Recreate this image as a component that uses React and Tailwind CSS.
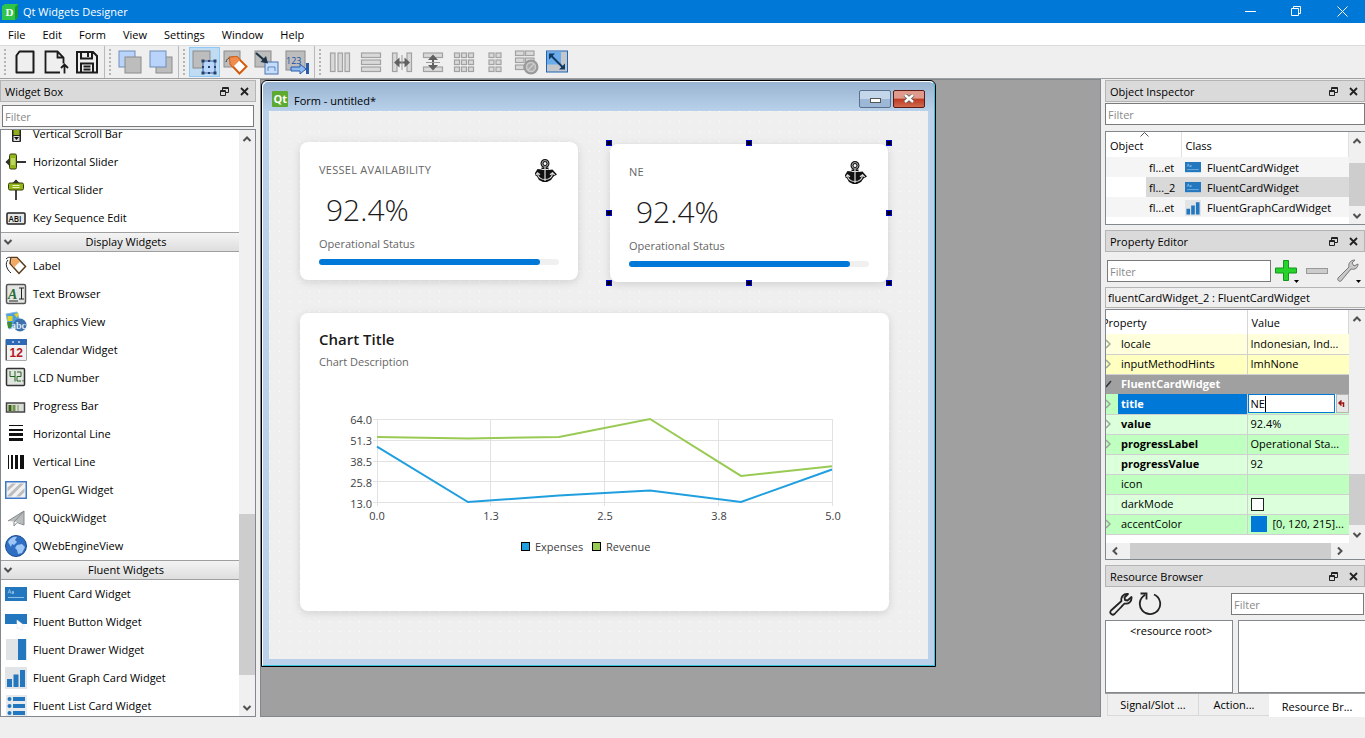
import React, { useState } from 'react';

/* ---------- small shared glyphs ---------- */

const Chevron = ({ dir = 'down' }) => {
  const paths = {
    down: 'M1.5 3 5 6.5 8.5 3',
    up: 'M1.5 7 5 3.5 8.5 7',
    left: 'M7 1.5 3.5 5 7 8.5',
    right: 'M3 1.5 6.5 5 3 8.5',
  };
  return (
    <svg width="10" height="10" viewBox="0 0 10 10" fill="none" stroke="#505050" strokeWidth="2">
      <path d={paths[dir]} />
    </svg>
  );
};

const CardGlyph = ({ className }) => (
  <svg className={className} viewBox="0 0 22 14">
    <rect width="22" height="14" fill="#2277bf" />
    <path d="M3 6.500 4.500 2.500 6 6.500M3.600 5.200h1.800M7 4.500h1.500v2H7V5.500h1.500" stroke="#9cc6ea" strokeWidth=".8" fill="none" />
    <path d="M3 10.500h16" stroke="#8fc0e8" strokeWidth="1" />
  </svg>
);

const GraphGlyph = ({ className }) => (
  <svg className={className} viewBox="0 0 22 22">
    <rect width="22" height="22" fill="#e1e5e7" />
    <path d="M2 12h5v8H2zM8.500 7.500h5V20h-5zM15 3h5v17h-5z" fill="#2277bf" />
  </svg>
);

const AnchorGlyph = () => (
  <svg width="22" height="23" viewBox="0 0 22 23" fill="none">
    <circle cx="10" cy="4.500" r="3" stroke="#111" strokeWidth="3" fill="#fff" />
    <path d="M6.500 8.500h7V11l4-.5 4.500 5-3.500 2-2.500 3.500-4 2H8l-4-2-2-3.500-2-1.500v-2l2.500-4 4 .5z" fill="#111" />
    <circle cx="10" cy="4.500" r="3" stroke="#ccc" strokeWidth=".8" />
    <path d="M6.500 10.500h7M10 8v14M2.500 14.500c.5 4 3.500 6 7.500 6s7-2 7.500-6M.8 16l1.700-2.200L5 15.800M15 15.800l2.500-2 2.200 2.200" stroke="#ddd" strokeWidth="1.200" />
  </svg>
);

/* ---------- toolbar drawings ---------- */

const GraySquare = ({ x, y, s = 16 }) => (
  <rect x={x} y={y} width={s} height={s} fill="#bdbdbd" stroke="#8c8c8c" />
);
const BlueSquare = ({ x, y, s = 16 }) => (
  <rect x={x} y={y} width={s} height={s} fill="#b9d3fa" stroke="#6f8db8" />
);
const cell = { fill: '#d9d9d9', stroke: '#a2a2a2', strokeWidth: 1.2 };

const toolGroups = [
  [
    {
      name: 'New',
      art: <path d="M6.500 1.500h14v21h-17V5.500z" fill="none" stroke="#1b1b1b" strokeWidth="2" strokeLinejoin="round" />,
    },
    {
      name: 'Open',
      art: (
        <g fill="none" stroke="#1b1b1b" strokeWidth="1.800">
          <path d="M16 22.500H1.500v-21h12l6 6v6M13.500 1.500v6h6M20.500 23.500v-9M17 18l3.500-3.500L24 18" />
        </g>
      ),
    },
    {
      name: 'Save',
      art: (
        <g fill="none" stroke="#1b1b1b" strokeWidth="2">
          <path d="M2 2h16l4 4v16.500H2zM6 2v6.500h11V2M6 22.500V13.500h12v9M8.500 16.500h7M8.500 19.500h7M13 3v4" />
        </g>
      ),
    },
  ],
  [
    { name: 'Send to Back', art: <><BlueSquare x={1} y={1} /><GraySquare x={7} y={7} /></> },
    { name: 'Bring to Front', art: <><GraySquare x={7} y={7} /><BlueSquare x={1} y={1} /></> },
  ],
  [
    {
      name: 'Edit Widgets',
      active: true,
      art: (
        <>
          <GraySquare x={1} y={1} s={17} />
          <rect x="11" y="11" width="12" height="12" fill="#b9d6fb" stroke="#3c62a0" />
          <path d="M9.500 9.500h3v3h-3zM16 10h2v2h-2zM21.500 9.500h3v3h-3zM9.500 21.500h3v3h-3zM16 22h2v2h-2zM21.500 21.500h3v3h-3zM22 16h2v2h-2zM10 16h2v2h-2zM16 16h2v2h-2z" fill="#27406b" />
        </>
      ),
    },
    {
      name: 'Edit Signals/Slots',
      art: (
        <>
          <GraySquare x={1} y={1} />
          <path d="M3 12c1-4 4-5 8-5" stroke="#333" fill="none" />
          <path d="M7 7.500 14 7l9.500 9.500-7 7L7.500 14z" fill="#fff" stroke="#d35c0c" strokeWidth="2" />
          <path d="M7 7.500 14 7l3 3-7 7-2.500-3z" fill="#f08c4e" />
        </>
      ),
    },
    {
      name: 'Edit Buddies',
      art: (
        <>
          <GraySquare x={1} y={1} />
          <rect x="11" y="12" width="13" height="12" fill="#c5dcfb" stroke="#4b74b3" />
          <path d="M14 21v-4h7v4" stroke="#5d87c5" fill="none" />
          <path d="M2 3l8 7" stroke="#1f3545" strokeWidth="2.200" />
          <path d="M14 13.500 6.500 12l5.500-6z" fill="#1f3545" />
        </>
      ),
    },
    {
      name: 'Edit Tab Order',
      art: (
        <>
          <GraySquare x={1} y={1} s={19} />
          <text x="1" y="14" fontSize="9" fill="#1a50a5" fontFamily="Open Sans, sans-serif">123</text>
          <path d="M6 17h9v-3l6 5-6 5v-3H6z" fill="#8db9f0" stroke="#2a5ca8" />
          <path d="M22.500 13v11" stroke="#2a5ca8" strokeWidth="3" />
        </>
      ),
    },
  ],
  [
    {
      name: 'Lay Out Horizontally',
      art: <g {...cell}><rect x="2.500" y="3" width="4.500" height="18.500" /><rect x="10" y="3" width="4.500" height="18.500" /><rect x="17" y="3" width="4.500" height="18.500" /></g>,
    },
    {
      name: 'Lay Out Vertically',
      art: <g {...cell}><rect x="2.500" y="3" width="19" height="4.500" /><rect x="2.500" y="10" width="19" height="4.500" /><rect x="2.500" y="17" width="19" height="4.500" /></g>,
    },
    {
      name: 'Horizontal Splitter',
      art: (
        <>
          <g {...cell}><rect x="2.500" y="3" width="4.500" height="18.500" /><rect x="17" y="3" width="4.500" height="18.500" /></g>
          <path d="M4 12.500 9.500 7.500v4h5v-4l5.500 5-5.500 5v-4h-5v4z" fill="#606060" />
          <path d="M12 5v15" stroke="#999" />
        </>
      ),
    },
    {
      name: 'Vertical Splitter',
      art: (
        <>
          <g {...cell}><rect x="2.500" y="3" width="19" height="4.500" /><rect x="2.500" y="17" width="19" height="4.500" /></g>
          <path d="M12 4.500 17 10h-4v5h4l-5 5.500L7 15h4v-5H7z" fill="#606060" />
          <path d="M5 12.500h14" stroke="#999" />
        </>
      ),
    },
    {
      name: 'Lay Out in a Grid',
      art: (
        <g {...cell}>
          {[3, 10, 17].map((y) => [2.5, 9.5, 16.5].map((x) => <rect key={`${x}-${y}`} x={x} y={y} width="5" height="4.500" />))}
        </g>
      ),
    },
    {
      name: 'Lay Out in a Form',
      art: (
        <g {...cell}>
          {[3, 10, 17].map((y) => [6, 13].map((x) => <rect key={`${x}-${y}`} x={x} y={y} width="5" height="4.500" />))}
        </g>
      ),
    },
    {
      name: 'Break Layout',
      art: (
        <>
          <g {...cell}>
            {[1, 8, 15].map((y) => [1.5, 11.5].map((x) => <rect key={`${x}-${y}`} x={x} y={y} width="8.500" height="4.500" />))}
          </g>
          <circle cx="17" cy="17" r="7.500" fill="#999" />
          <circle cx="17" cy="17" r="4.500" fill="#aaa" stroke="#ccc" strokeWidth="1.500" />
          <path d="m14 20 6-6" stroke="#ccc" strokeWidth="1.500" />
        </>
      ),
    },
    {
      name: 'Adjust Size',
      art: (
        <>
          <rect x="1.500" y="1" width="21" height="21" fill="#c3c6cb" stroke="#1d65b5" />
          <rect x="2" y="1.500" width="14" height="13" fill="#6cacea" />
          <path d="m6.500 6 11 11" stroke="#123a63" strokeWidth="2" />
          <path d="M4 3.500h6l-6 6zM20 19.500h-6l6-6z" fill="#123a63" />
        </>
      ),
    },
  ],
];

const Toolbar = () => (
  <div className="flex h-[34px] shrink-0 border-t border-b border-t-[#dcdcdc] border-b-[#a0a0a0] bg-[#efefef]">
    {toolGroups.map((group, i) => (
      <div key={i} className="flex items-center border-r border-[#b9b9b9] pr-px last:border-r-0">
        <span className="mx-1 h-[26px] border-l-2 border-dotted border-[#b5b5b5]" />
        {group.map((tool) => (
          <button
            key={tool.name}
            aria-label={tool.name}
            className={
              tool.active
                ? 'flex h-[30px] w-[31px] items-center justify-center border border-[#90c8f6] bg-[#c0dcf3]'
                : 'flex h-[30px] w-[31px] items-center justify-center'
            }
          >
            <svg width="25" height="25" viewBox="0 0 25 25" className="shrink-0 overflow-visible">{tool.art}</svg>
          </button>
        ))}
      </div>
    ))}
  </div>
);

/* ---------- widget box ---------- */

const art = {
  vscroll: (
    <>
      <rect x="7" y="0" width="9" height="19" rx="1" fill="#222" />
      <rect x="8.500" y="0" width="6" height="12" fill="#8fae1b" />
      <rect x="8.500" y="13" width="6" height="5" fill="#ddd" />
      <path d="M9 14h5l-2.500 3z" fill="#111" />
    </>
  ),
  hslider: (
    <>
      <path d="M1 11h20" stroke="#333" strokeWidth="2" />
      <path d="M4 7.500v7L.5 11z" fill="#333" />
      <rect x="4.500" y="3" width="7" height="15" rx="1.500" fill="#94b51c" stroke="#333d0a" />
      <path d="M7 7v7M9 7v7" stroke="#e7f2b5" />
    </>
  ),
  vslider: (
    <>
      <path d="M11 1v20" stroke="#444" strokeWidth="2" />
      <path d="M7.500 4 11 .5 14.500 4z" fill="#333" />
      <rect x="3.500" y="4" width="15" height="7" rx="1.500" fill="#94b51c" stroke="#333d0a" />
      <path d="M7.500 6.500h7M7.500 8.500h7" stroke="#e7f2b5" />
    </>
  ),
  keyseq: (
    <>
      <rect x="2" y="6" width="18" height="11" rx="1" fill="#e8e8e8" stroke="#222" strokeWidth="1.500" />
      <text x="3.500" y="14.500" fontSize="8" fontFamily="Open Sans, sans-serif" fontWeight="600" fill="#111">ABI</text>
    </>
  ),
  label: (
    <>
      <path d="M1 4c4-4 6 0 8 2M3 5c-3 3-2 9 3 13" stroke="#222" fill="none" />
      <path d="M6 2.500h6l8.500 9-6.500 7-9-10z" fill="#fff" stroke="#5a3c1a" strokeWidth="1.500" />
      <path d="M6.500 3.500H12l3 3-6 6-3-4z" fill="#f0aa66" />
    </>
  ),
  textBrowser: (
    <>
      <rect x="1.500" y="1.500" width="19" height="19" rx="1.500" fill="#e4e6e4" stroke="#555" strokeWidth="1.500" />
      <text x="3" y="16" fontSize="14" fontFamily="Liberation Serif, serif" fontWeight="700" fontStyle="italic" fill="#2c6b36">A</text>
      <path d="M14 5h5M16.500 5v11M14 16h5M4 18h9" stroke="#222" />
    </>
  ),
  graphics: (
    <>
      <path d="M1 3 12 1l4 13-12 4z" fill="#4f9ede" stroke="#86b6de" />
      <path d="M2.500 5h5v5h-5zM9 3l5-1-2 5z" fill="#e2d327" />
      <path d="M2 11h5v6H3z" fill="#3f8a35" />
      <circle cx="15" cy="14" r="6.500" fill="#3d70ad" />
      <text x="6" y="18" fontSize="10" fontFamily="Liberation Serif, serif" fill="#dce9f7" fontWeight="700">abc</text>
    </>
  ),
  calendar: (
    <>
      <rect x=".5" y=".5" width="21" height="21" fill="#555" />
      <rect x="2" y="6" width="19" height="15" fill="#f2f2f2" />
      <rect x="1" y="0" width="21" height="6" fill="#2f68b4" />
      <path d="M7 3h2M13 3h2" stroke="#cde" strokeWidth="1.500" />
      <text x="4.500" y="18" fontSize="12" fontFamily="Liberation Sans, sans-serif" fontWeight="700" fill="#b3191f">12</text>
    </>
  ),
  lcd: (
    <>
      <rect x="1.500" y="1.500" width="18" height="17" rx="1" fill="#e1e5df" stroke="#333" strokeWidth="1.500" />
      <path d="M5 4v5.500h5M10 4v10.500M12 5h4v4.500h-4V14h4M18 13v1.500" stroke="#226322" fill="none" />
    </>
  ),
  progress: (
    <>
      <rect x="1.500" y="8" width="18" height="9" fill="#d9ddd5" stroke="#444" strokeWidth="1.500" />
      <path d="M5 10v6" stroke="#396111" strokeWidth="3" />
      <path d="M9 10v6" stroke="#6f9350" strokeWidth="3" />
      <path d="M13 10v6" stroke="#a6bb95" strokeWidth="2" />
    </>
  ),
  hline: (
    <g fill="#111">
      <rect x="4" y="2" width="14" height="1" /><rect x="4" y="6" width="14" height="2" />
      <rect x="4" y="10" width="14" height="3" /><rect x="4" y="15" width="14" height="3" />
    </g>
  ),
  vline: (
    <g fill="#111">
      <rect x="3" y="4" width="1" height="14" /><rect x="6" y="4" width="2" height="14" />
      <rect x="10" y="4" width="3" height="14" /><rect x="15" y="4" width="4" height="14" />
    </g>
  ),
  opengl: (
    <>
      <rect x=".75" y="2.750" width="20.500" height="16.500" fill="#f2f2f2" stroke="#3f78c4" strokeWidth="1.500" />
      <path d="M2.500 8.500 7 4.500h4L2.500 12.500zM2.500 16.500 15 4.500h4L6 17.500H2.500zM11 17.500l8.500-8.500v4L15 17.500z" fill="#bdbdbd" />
    </>
  ),
  quick: (
    <>
      <path d="M3 14 19 4v14l-6-3z" fill="#b9bcbd" />
      <path d="M3 14 19 4 9 15v4l3-3.500 7 2.500V4" fill="none" stroke="#85898b" />
    </>
  ),
  web: (
    <>
      <circle cx="11" cy="11" r="10.500" fill="#2f6fc3" stroke="#1d4c92" />
      <path d="M3 7c2-4 6-6 9-5l-2 3 2 2-3 3-2-1-1 3zM12 10l5-1 3 3-3 6-4 1-1-4-2-2z" fill="#9cc6f5" />
    </>
  ),
  button: (
    <>
      <rect y="3" width="22" height="10" fill="#2277bf" />
      <path d="M12 9v9l2.500-2 1.500 3 2-1-1.500-3H20z" fill="#fff" stroke="#dfe6ec" strokeWidth=".6" />
    </>
  ),
  drawer: (
    <>
      <rect x="1" width="21" height="21" fill="#e1e4e6" />
      <rect x="13" width="8" height="21" fill="#2277bf" />
    </>
  ),
  list: (
    <>
      <rect x="1" width="21" height="22" fill="#e6eaec" />
      <g fill="#2277bf">
        <circle cx="4.500" cy="4" r="2" /><circle cx="4.500" cy="11" r="2" /><circle cx="4.500" cy="18" r="2" />
        <rect x="8" y="2" width="12" height="4" /><rect x="8" y="9" width="12" height="4" /><rect x="8" y="16" width="12" height="4" />
      </g>
    </>
  ),
};

const widgetSections = [
  {
    items: [
      ['Vertical Scroll Bar', art.vscroll],
      ['Horizontal Slider', art.hslider],
      ['Vertical Slider', art.vslider],
      ['Key Sequence Edit', art.keyseq],
    ],
  },
  {
    title: 'Display Widgets',
    items: [
      ['Label', art.label],
      ['Text Browser', art.textBrowser],
      ['Graphics View', art.graphics],
      ['Calendar Widget', art.calendar],
      ['LCD Number', art.lcd],
      ['Progress Bar', art.progress],
      ['Horizontal Line', art.hline],
      ['Vertical Line', art.vline],
      ['OpenGL Widget', art.opengl],
      ['QQuickWidget', art.quick],
      ['QWebEngineView', art.web],
    ],
  },
  {
    title: 'Fluent Widgets',
    items: [
      ['Fluent Card Widget', <CardGlyph />],
      ['Fluent Button Widget', art.button],
      ['Fluent Drawer Widget', art.drawer],
      ['Fluent Graph Card Widget', <GraphGlyph />],
      ['Fluent List Card Widget', art.list],
    ],
  },
];

const DockTitle = ({ children }) => (
  <div className="flex h-[22px] shrink-0 items-center border border-[#b4b4b4] bg-[#dadada] pr-px pl-1">
    <h2 className="flex-1 pt-0.5">{children}</h2>
    <button aria-label={`Float ${children}`} className="flex w-5 justify-center">
      <svg width="9" height="9" viewBox="0 0 9 9" fill="none" stroke="#222">
        <path d="M.5 3.500h5v5h-5zM.5 4.500h5M2.500 3V.5h6v5H6M2.500 1.500h6" />
      </svg>
    </button>
    <button aria-label={`Close ${children}`} className="flex w-5 justify-center">
      <svg width="9" height="9" viewBox="0 0 9 9" stroke="#222" strokeWidth="1.800">
        <path d="m1 1 7 7M8 1 1 8" />
      </svg>
    </button>
  </div>
);

const FilterInput = ({ className, label }) => (
  <input
    type="text"
    aria-label={label}
    placeholder="Filter"
    className={`h-[22px] min-w-0 border border-[#7a7a7a] bg-white px-0.5 pt-px outline-none placeholder:text-[#8a8a8a] ${className}`}
  />
);

const WidgetBox = () => (
  <aside className="flex w-[260px] shrink-0 flex-col pt-px pr-1">
    <DockTitle>Widget Box</DockTitle>
    <FilterInput label="Filter widgets" className="mx-0.5 mt-[3px] mb-0.5 shrink-0" />
    <div className="flex min-h-0 flex-1 border border-[#828790] bg-white">
      <div className="min-h-0 flex-1 overflow-hidden">
        <div className="-mt-[10px]">
          {widgetSections.map((section, i) => (
            <section key={i}>
              {section.title && (
                <button className="flex h-5 w-full items-center border-y border-[#a0a0a0] bg-gradient-to-b from-[#f4f4f4] to-[#dedede] pl-0.5">
                  <Chevron />
                  <span className="flex-1 text-center">{section.title}</span>
                </button>
              )}
              <ul>
                {section.items.map(([name, icon]) => (
                  <li key={name} className="flex h-7 items-center gap-1.5 pl-1">
                    {typeof icon.type === 'function' ? (
                      <span className="flex w-[22px] shrink-0">{icon}</span>
                    ) : (
                      <svg width="22" height="22" viewBox="0 0 22 22" className="shrink-0">{icon}</svg>
                    )}
                    <span className="whitespace-nowrap">{name}</span>
                  </li>
                ))}
              </ul>
            </section>
          ))}
        </div>
      </div>
      <div className="flex w-4 flex-col items-center bg-[#f0f0f0]">
        <button aria-label="Scroll up" className="flex h-[17px] items-center"><Chevron dir="up" /></button>
        <div className="w-full flex-[367]" />
        <div className="w-full flex-[161] bg-[#cdcdcd]" />
        <div className="w-full flex-[24]" />
        <button aria-label="Scroll down" className="flex h-[17px] items-center"><Chevron /></button>
      </div>
    </div>
  </aside>
);

/* ---------- form being designed ---------- */

const FluentCard = ({ title, value, status, progress }) => (
  <article className="h-[138px] w-[278px] rounded-lg bg-white px-[19px] pt-4 shadow-[0_2px_8px_rgba(0,0,0,0.13)]">
    <div className="flex h-6 items-center justify-between pr-0.5">
      <h3 className="text-[11px] tracking-wide text-[#666]">{title}</h3>
      <AnchorGlyph />
    </div>
    <p className="mt-[5px] pl-[7px] text-[30px] leading-[46px] font-light text-[#1a1a1a]">{value}</p>
    <p className="mt-px leading-5 text-[#666]">{status}</p>
    <div className="mt-[5px] h-1.5 rounded-full bg-[#f0f0f0]">
      <div className="h-1.5 rounded-full bg-[#0078d7]" style={{ width: `${progress}%` }} />
    </div>
  </article>
);

const handles = [
  '-left-[3px] -top-[3px]', 'left-[137px] -top-[3px]', '-right-[3px] -top-[3px]',
  '-left-[3px] top-[67px]', '-right-[3px] top-[67px]',
  '-left-[3px] -bottom-[3px]', 'left-[137px] -bottom-[3px]', '-right-[3px] -bottom-[3px]',
];

// plot area: x 58..513, y 12..95, value range 13..64
const px = (x) => 58 + x * 91;
const py = (v) => 95 - ((v - 13) / 51) * 83;
const toPoints = (data) => data.map((v, i) => `${px(i)},${py(v)}`).join(' ');

const expenses = [47, 13, 17, 20, 13, 33];
const revenue = [53, 52, 53, 64, 29, 35];

const LineChart = () => (
  <svg width="535" height="160" viewBox="0 0 535 160" className="overflow-visible" fontSize="11" fill="#404044">
    <g stroke="#e2e2e2">
      {[12.5, 33.5, 54.5, 74.5, 95.5].map((y) => <path key={y} d={`M54 ${y}H514`} />)}
      {[58.5, 171.5, 285.5, 399.5, 513.5].map((x) => <path key={x} d={`M${x} 12V99`} />)}
    </g>
    <g fill="none" strokeWidth="2">
      <polyline points={toPoints(revenue)} stroke="#99ca53" />
      <polyline points={toPoints(expenses)} stroke="#209fdf" />
    </g>
    <g textAnchor="end">
      {['64.0', '51.3', '38.5', '25.8', '13.0'].map((t, i) => <text key={t} x="53" y={17 + i * 21}>{t}</text>)}
    </g>
    <g textAnchor="middle">
      {['0.0', '1.3', '2.5', '3.8', '5.0'].map((t, i) => <text key={t} x={58 + i * 114} y="113">{t}</text>)}
    </g>
    <rect x="202.500" y="135.500" width="8" height="8" fill="#209fdf" stroke="#000" />
    <text x="216" y="144">Expenses</text>
    <rect x="273.500" y="135.500" width="8" height="8" fill="#99ca53" stroke="#000" />
    <text x="287" y="144">Revenue</text>
  </svg>
);

const FormWindow = () => (
  <section className="w-[675px] shrink-0 rounded-t-md border border-black bg-[#b9d1ea]">
    <div className="rounded-t-md border border-t-white border-r-[#35c5dc] border-b-[#35c5dc] border-l-white bg-[linear-gradient(#99b4d1,#b9d1ea_29px)] px-1.5 pb-1.5">
      <header className="flex h-[29px] items-center pt-1">
        <svg width="16" height="16" viewBox="0 0 16 16" className="ml-[3px]">
          <rect width="16" height="16" rx="1" fill="#5caa2f" />
          <text x="1.500" y="12" fontSize="11" fontWeight="700" fill="#fff" fontFamily="Open Sans, sans-serif">Qt</text>
        </svg>
        <h1 className="flex-1 pt-1 pl-1.5">Form - untitled*</h1>
        <button aria-label="Minimize form" className="mr-0.5 flex h-[18px] w-8 items-center justify-center rounded-xs border border-[#5a708c] bg-[linear-gradient(#c3d6ea_50%,#9db8d6_50%)]">
          <span className="mt-1 h-[5px] w-[11px] border border-[#555] bg-white" />
        </button>
        <button aria-label="Close form" className="mr-[3px] flex h-[18px] w-8 items-center justify-center rounded-xs border border-[#5b1a14] bg-[linear-gradient(#e09a8c_45%,#bd3a22_50%,#cf6a4e)]">
          <svg width="12" height="9" viewBox="0 0 12 9">
            <path d="m2 1 8 7M10 1 2 8" stroke="#555" strokeWidth="4" />
            <path d="m2 1 8 7M10 1 2 8" stroke="#fff" strokeWidth="2.500" />
          </svg>
        </button>
      </header>
      <div className="bg-[#efefef] bg-[radial-gradient(circle_at_0_0,#fff_1px,transparent_1px)] bg-[size:10px_10px] px-[30px] pt-[30px] pb-[47px]">
        <div className="flex items-start gap-[30px]">
          <div className="p-px">
            <FluentCard title="VESSEL AVAILABILITY" value="92.4%" status="Operational Status" progress={92} />
          </div>
          <div className="relative mt-0.5 p-px">
            <FluentCard title="NE" value="92.4%" status="Operational Status" progress={92} />
            {handles.map((pos) => (
              <span key={pos} className={`absolute size-1.5 border border-[#0000d8] bg-black ${pos}`} />
            ))}
          </div>
        </div>
        <article className="mx-px mt-[30px] mb-px h-[298px] w-[589px] rounded-lg bg-white px-[19px] pt-4 shadow-[0_2px_8px_rgba(0,0,0,0.13)]">
          <h3 className="text-[15px] leading-5 font-semibold text-[#1a1a1a]">Chart Title</h3>
          <p className="mt-[3px] mb-[35px] leading-5 text-[#666]">Chart Description</p>
          <LineChart />
        </article>
      </div>
    </div>
  </section>
);

/* ---------- right docks ---------- */

const VScroll = ({ before, thumb, after }) => (
  <div className="flex w-4 shrink-0 flex-col items-center bg-[#f0f0f0]">
    <button aria-label="Scroll up" className="flex h-[17px] items-center"><Chevron dir="up" /></button>
    <div style={{ flex: before }} />
    <div className="w-full bg-[#cdcdcd]" style={{ flex: thumb }} />
    <div style={{ flex: after }} />
    <button aria-label="Scroll down" className="flex h-[17px] items-center"><Chevron /></button>
  </div>
);

const objects = [
  { name: 'fl...et', cls: 'FluentCardWidget', icon: <CardGlyph className="w-4" />, row: 'bg-[#f5f5f5]' },
  { name: 'fl..._2', cls: 'FluentCardWidget', icon: <CardGlyph className="w-4" />, row: 'bg-[linear-gradient(to_right,#fff_40px,#d9d9d9_40px)]' },
  { name: 'fl...et', cls: 'FluentGraphCardWidget', icon: <GraphGlyph className="w-4" />, row: 'bg-[#f5f5f5]' },
];

const ObjectInspector = () => (
  <section>
    <DockTitle>Object Inspector</DockTitle>
    <FilterInput label="Filter objects" className="mt-px w-full" />
    <div className="mt-1.5 flex h-[94px] border border-r-0 border-[#828790] bg-white">
      <div className="min-w-0 flex-1">
        <table className="w-full table-fixed border-collapse">
          <thead>
            <tr className="h-[25px] text-left">
              <th className="relative w-[75px] border-r border-[#e0e0e0] pt-0.5 pl-1 font-normal">
                Object
                <svg width="9" height="5" viewBox="0 0 9 5" fill="none" stroke="#555" className="absolute top-0 left-[34px]">
                  <path d="M.5 4.500l4-4 4 4" />
                </svg>
              </th>
              <th className="border-r border-[#e0e0e0] pt-0.5 pl-1 font-normal">Class</th>
            </tr>
          </thead>
          <tbody>
            {objects.map((o, i) => (
              <tr key={i} className={`h-5 ${o.row}`}>
                <td className="pt-px pl-[43px] whitespace-nowrap">{o.name}</td>
                <td className="pt-px pl-1">
                  <span className="flex items-center gap-1.5 whitespace-nowrap">{o.icon}{o.cls}</span>
                </td>
              </tr>
            ))}
          </tbody>
        </table>
      </div>
      <VScroll before={14} thumb={43} after={1} />
    </div>
  </section>
);

const Expander = () => (
  <svg width="5" height="10" viewBox="0 0 5 10" fill="none" stroke="#9aa59a" strokeWidth="1.500">
    <path d="M0 1l4 4-4 4" />
  </svg>
);

const properties = [
  { name: 'locale', value: 'Indonesian, Ind...', expand: true, row: 'bg-[#ffffdc]' },
  { name: 'inputMethodHints', value: 'ImhNone', expand: true, row: 'bg-[#ffffbf]' },
  { group: 'FluentCardWidget' },
  { name: 'title', editor: 'text', expand: true, bold: true, row: 'bg-[#bfffbf]' },
  { name: 'value', value: '92.4%', expand: true, bold: true, row: 'bg-[#dcffdc]' },
  { name: 'progressLabel', value: 'Operational Sta...', expand: true, bold: true, row: 'bg-[#bfffbf]' },
  { name: 'progressValue', value: '92', bold: true, row: 'bg-[#dcffdc]' },
  { name: 'icon', value: '', row: 'bg-[#bfffbf]' },
  { name: 'darkMode', editor: 'check', row: 'bg-[#dcffdc]' },
  { name: 'accentColor', editor: 'color', value: '[0, 120, 215]...', expand: true, row: 'bg-[#bfffbf]' },
];

const PropertyValue = ({ prop }) => {
  const [text, setText] = useState('NE');
  const [checked, setChecked] = useState(false);

  if (prop.editor === 'text') {
    return (
      <div className="flex h-[19px] bg-white">
        <label className="flex min-w-0 flex-1 items-center border border-[#0078d7] pl-0.5">
          <input
            aria-label="title"
            value={text}
            onChange={(e) => setText(e.target.value)}
            className="field-sizing-content h-4 max-w-full border-r border-black outline-none"
          />
        </label>
        <button aria-label="Reset title" className="ml-px flex w-[13px] items-center justify-center border border-[#b5b5b5] bg-[#e6e6e6]">
          <svg width="8" height="8" viewBox="0 0 8 8" fill="none" stroke="#9b1010" strokeWidth="1.500">
            <path d="M1 3h4.500v4M3.500.5 1 3l2.500 2.500" />
          </svg>
        </button>
      </div>
    );
  }
  if (prop.editor === 'check') {
    return (
      <input
        type="checkbox"
        aria-label="darkMode"
        checked={checked}
        onChange={(e) => setChecked(e.target.checked)}
        className="ml-[3px] block size-[13px] appearance-none border border-[#222] bg-white checked:bg-[#0078d7]"
      />
    );
  }
  if (prop.editor === 'color') {
    return (
      <span className="flex items-center gap-1.5 pl-[3px]">
        <span className="size-4 shrink-0 bg-[#0078d7]" />
        {prop.value}
      </span>
    );
  }
  return <span className="pl-[3px]">{prop.value}</span>;
};

const PropertyEditor = () => (
  <section className="mt-[5px] flex flex-col">
    <DockTitle>Property Editor</DockTitle>
    <div className="flex h-[35px] items-center pt-0.5 pl-0.5">
      <FilterInput label="Filter properties" className="w-[164px]" />
      <button aria-label="Add dynamic property" className="ml-1 w-[26px]">
        <svg width="26" height="24" viewBox="0 0 26 24">
          <path d="M8.500 1.500h5v7.500h8v5h-8v7.500h-5V14h-8V9h8z" fill="#25d32a" stroke="#12951a" />
          <path d="M19 21h5l-2.500 3z" fill="#000" />
        </svg>
      </button>
      <button aria-label="Remove dynamic property" className="ml-[5px] w-[22px]">
        <svg width="22" height="6" viewBox="0 0 22 6"><rect x=".5" y=".5" width="21" height="5" fill="#ccc" stroke="#999" /></svg>
      </button>
      <button aria-label="Configure property editor" className="ml-2 w-[26px]">
        <svg width="26" height="25" viewBox="0 0 26 25">
          <path d="M2 20 13 9c-1-3 1-7 6-7l-3 3 2 3 4-2c0 4-3 6-7 5L5 23c-2 1-4-1-3-3z" fill="#c8c8c8" stroke="#777" />
          <path d="M20 22h5l-2.500 3z" fill="#000" />
        </svg>
      </button>
    </div>
    <p className="h-[21px] border border-r-0 border-[#b4b4b4] pl-0.5 leading-5 whitespace-nowrap">fluentCardWidget_2 : FluentCardWidget</p>
    <div className="mt-px border border-r-0 border-[#828790] bg-white">
      <div className="flex h-[233px]">
        <div className="min-w-0 flex-1">
          <table className="w-full table-fixed border-collapse">
            <thead>
              <tr className="h-6 text-left">
                <th className="w-3" />
                <th className="w-[129px] border-r border-[#d6d6d6] pt-0.5 font-normal">
                  <span className="-ml-3 block overflow-hidden"><span className="-ml-1 block">Property</span></span>
                </th>
                <th className="border-r border-[#d6d6d6] pt-0.5 pl-1 font-normal">Value</th>
              </tr>
            </thead>
            <tbody>
              {properties.map((prop) =>
                prop.group ? (
                  <tr key={prop.group} className="h-5 bg-[#a0a0a0] font-bold text-white">
                    <td className="p-0">
                      <svg width="6" height="8" viewBox="0 0 6 8" fill="none" stroke="#333" strokeWidth="1.500"><path d="M0 7l5-6" /></svg>
                    </td>
                    <td colSpan="2" className="pl-[3px]">{prop.group}</td>
                  </tr>
                ) : (
                  <tr key={prop.name} className={`h-5 border-b border-[#d0d0d0] ${prop.row}`}>
                    <td className="p-0">{prop.expand && <Expander />}</td>
                    <td
                      className={
                        prop.editor === 'text'
                          ? 'border-r border-[#d0d0d0] bg-[#0078d7] p-0 pl-[3px] font-bold text-white'
                          : prop.bold
                            ? 'border-r border-[#d0d0d0] p-0 pl-[3px] font-bold'
                            : 'border-r border-[#d0d0d0] p-0 pl-[3px]'
                      }
                    >
                      {prop.name}
                    </td>
                    <td className="overflow-hidden p-0 whitespace-nowrap"><PropertyValue prop={prop} /></td>
                  </tr>
                )
              )}
            </tbody>
          </table>
        </div>
        <VScroll before={147} thumb={51} after={1} />
      </div>
      <div className="flex h-4">
        <div className="flex min-w-0 flex-1 items-stretch bg-[#f0f0f0]">
          <button aria-label="Scroll left" className="flex w-6 items-center pl-1"><Chevron dir="left" /></button>
          <div className="flex-1 bg-[#cdcdcd]" />
          <button aria-label="Scroll right" className="flex w-[18px] items-center justify-center"><Chevron dir="right" /></button>
        </div>
        <div className="w-4 bg-[#f0f0f0]" />
      </div>
    </div>
  </section>
);

const ResourceBrowser = () => (
  <section className="mt-[5px] flex min-h-0 flex-1 flex-col">
    <DockTitle>Resource Browser</DockTitle>
    <div className="flex h-[33px] items-center pt-px pr-px pl-1">
      <button aria-label="Edit resources">
        <svg width="24" height="24" viewBox="0 0 24 24" fill="none" stroke="#222" strokeWidth="1.800" strokeLinejoin="round">
          <path d="M2 18.500 12.500 9C11.500 5 14.500 1.500 19 2l-3.500 3.500.5 2.500 2.500.5L22.500 5c.5 4.500-3 7.500-7 6.500L5.500 22C3 24 0 21 2 18.500z" />
        </svg>
      </button>
      <button aria-label="Reload" className="ml-[5px]">
        <svg width="24" height="24" viewBox="0 0 24 24" fill="none" stroke="#222" strokeWidth="1.800">
          <path d="M16 2.500a10.200 10.200 0 1 1-9 .5M2.500 1.500h6v6" />
        </svg>
      </button>
      <FilterInput label="Filter resources" className="ml-auto w-[133px]" />
    </div>
    <div className="flex min-h-0 flex-1 gap-[5px]">
      <ul className="w-[128px] border border-[#828790] bg-white pt-0.5 pl-6">
        <li>&lt;resource root&gt;</li>
      </ul>
      <div className="flex-1 border border-r-0 border-[#828790] bg-white" />
    </div>
    <div role="tablist" className="flex h-6 items-start border-t border-[#a0a0a0] pl-0.5">
      <button role="tab" className="h-[22px] w-[92px] border-r border-b border-l border-[#d9d9d9]">Signal/Slot ...</button>
      <button role="tab" className="h-[22px] w-[70px] border-b border-[#d9d9d9]">Action...</button>
      <button role="tab" aria-selected="true" className="h-[23px] flex-1 bg-white pt-0.5 whitespace-nowrap">Resource Br...</button>
    </div>
  </section>
);

/* ---------- main window ---------- */

const App = () => (
  <div className="flex h-screen min-h-[738px] flex-col overflow-hidden bg-[#efefef] font-['Open_Sans','Noto_Sans',sans-serif] text-[11px] leading-4 text-black">
    <header className="flex h-[23px] shrink-0 items-center bg-[#0078d7] text-white">
      <svg width="16" height="16" viewBox="0 0 16 16" className="ml-0.5">
        <path d="M0 2 3 0h13v13l-3 3H0z" fill="#2fc54c" />
        <path d="M13 3v13l3-3V0z" fill="#159a33" />
        <text x="3.500" y="12" fontSize="11" fontWeight="700" fill="#fff" fontFamily="Liberation Serif, serif">D</text>
      </svg>
      <span className="flex-1 pl-[5px]">Qt Widgets Designer</span>
      <div className="flex">
        <button aria-label="Minimize" className="flex w-[45px] items-center justify-center">
          <svg width="11" height="11" viewBox="0 0 11 11" stroke="#fff"><path d="M0 5.500h11" /></svg>
        </button>
        <button aria-label="Restore" className="flex w-[46px] items-center justify-center">
          <svg width="11" height="11" viewBox="0 0 11 11" stroke="#fff" fill="none"><path d="M.5 2.500h7v7h-7zM2.500 2V.5h7v7H8" /></svg>
        </button>
        <button aria-label="Close" className="flex w-[46px] items-center justify-center">
          <svg width="11" height="11" viewBox="0 0 11 11" stroke="#fff"><path d="m.5.5 10 10M10.500.5l-10 10" /></svg>
        </button>
      </div>
    </header>

    <nav className="flex h-[22px] shrink-0 items-center gap-[17px] bg-white pt-0.5 pl-2">
      {['File', 'Edit', 'Form', 'View', 'Settings', 'Window', 'Help'].map((item) => (
        <button key={item}>{item}</button>
      ))}
    </nav>

    <Toolbar />

    <div className="flex min-h-0 flex-1">
      <WidgetBox />
      <main className="flex min-w-0 flex-1 items-start overflow-hidden border border-[#828790] bg-[#a0a0a0]">
        <FormWindow />
      </main>
      <aside className="flex w-[264px] shrink-0 flex-col pt-px pl-1">
        <ObjectInspector />
        <PropertyEditor />
        <ResourceBrowser />
      </aside>
    </div>

    <footer className="h-[21px] shrink-0" />
  </div>
);

export default App;
